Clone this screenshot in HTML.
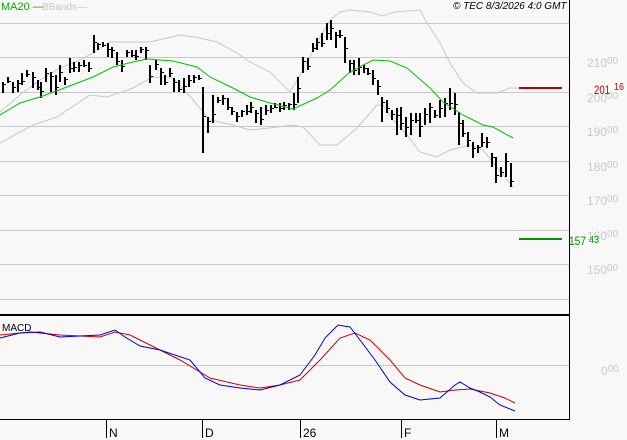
<!DOCTYPE html>
<html><head><meta charset="utf-8"><style>
html,body{margin:0;padding:0;background:#f8f8f8;width:627px;height:440px;overflow:hidden;font-family:"Liberation Sans",sans-serif}
svg{position:absolute;left:0;top:0}
</style></head><body>
<svg id="s" width="627" height="440" xmlns="http://www.w3.org/2000/svg" font-family="Liberation Sans, sans-serif">
<rect width="627" height="440" fill="#f8f8f8"/>
<g stroke="#c8c8c8" stroke-width="1">
<line x1="0" x2="569" y1="23.5" y2="23.5"/><line x1="0" x2="569" y1="57.5" y2="57.5"/><line x1="0" x2="569" y1="92.5" y2="92.5"/><line x1="0" x2="569" y1="126.5" y2="126.5"/><line x1="0" x2="569" y1="161.5" y2="161.5"/><line x1="0" x2="569" y1="195.5" y2="195.5"/><line x1="0" x2="569" y1="230.5" y2="230.5"/><line x1="0" x2="569" y1="264.5" y2="264.5"/><line x1="0" x2="569" y1="299.5" y2="299.5"/><line x1="0" x2="569" y1="365.5" y2="365.5"/>
</g>
<g fill="#c8c8c8" font-size="12">
<text x="587" y="67">210<tspan font-size="10" dy="-3">00</tspan></text>
<text x="587" y="102">200<tspan font-size="10" dy="-3">00</tspan></text>
<text x="587" y="136">190<tspan font-size="10" dy="-3">00</tspan></text>
<text x="587" y="171">180<tspan font-size="10" dy="-3">00</tspan></text>
<text x="587" y="205">170<tspan font-size="10" dy="-3">00</tspan></text>
<text x="587" y="240">160<tspan font-size="10" dy="-3">00</tspan></text>
<text x="587" y="274">150<tspan font-size="10" dy="-3">00</tspan></text>
<text x="601" y="375">0<tspan font-size="10" dy="-3">00</tspan></text>
</g>
<g id="bb" fill="none" stroke="#c8c8c8" stroke-width="1"></g>
<g id="bars" stroke="#000"></g>
<g id="ma" fill="none" stroke="#00c000" stroke-width="1"></g>
<g id="macd" fill="none" stroke-width="1"></g>
<line x1="519" x2="562" y1="88" y2="88" stroke="#c00000" stroke-width="2"/>
<text x="594" y="94" fill="#c00000" font-size="12" textLength="16" lengthAdjust="spacingAndGlyphs">201</text>
<text x="614" y="90" fill="#c00000" font-size="10" textLength="10" lengthAdjust="spacingAndGlyphs">16</text>
<line x1="519" x2="562" y1="239" y2="239" stroke="#009000" stroke-width="2"/>
<text x="569" y="245" fill="#009000" font-size="12" textLength="17" lengthAdjust="spacingAndGlyphs">157</text>
<text x="589" y="243" fill="#009000" font-size="10" textLength="10" lengthAdjust="spacingAndGlyphs">43</text>
<line x1="569.5" x2="569.5" y1="0" y2="420" stroke="#000" stroke-width="1"/>
<line x1="0" x2="570" y1="315" y2="315" stroke="#000" stroke-width="2"/>
<line x1="0" x2="570" y1="419.5" y2="419.5" stroke="#000" stroke-width="1"/>
<g stroke="#000" stroke-width="1">
<line x1="106.5" x2="106.5" y1="419" y2="438"/><line x1="202.5" x2="202.5" y1="419" y2="438"/><line x1="300.5" x2="300.5" y1="419" y2="438"/><line x1="401.5" x2="401.5" y1="419" y2="438"/><line x1="496.5" x2="496.5" y1="419" y2="438"/>
</g>
<g font-size="12" fill="#000">
<text x="109" y="437">N</text><text x="205" y="437">D</text><text x="303" y="437">26</text><text x="404" y="437">F</text><text x="499" y="437">M</text>
</g>
<text x="1" y="10" font-size="11" fill="#00b000">MA20 —</text>
<text x="42" y="10" font-size="10" fill="#c8c8c8">BBands—</text>
<text x="453" y="9" font-size="10" font-style="italic" fill="#000">© TEC 8/3/2026 4:0 GMT</text>
<text x="2" y="331" font-size="10" fill="#000">MACD</text>
</svg>
<script>
var NS="http://www.w3.org/2000/svg";
function pl(g,pts,col){var p=document.createElementNS(NS,"polyline");p.setAttribute("points",pts.map(function(a){return a.join(",")}).join(" "));if(col)p.setAttribute("stroke",col);document.getElementById(g).appendChild(p);}
pl("bb",[[0,143],[33,125],[57,117],[90,95],[107,97],[133,88],[153,77],[173,78],[187,93],[210,120],[233,125],[250,130],[270,128],[293,125],[303,127],[320,145],[337,145],[357,128],[377,105],[383,105],[393,120],[407,135],[420,152],[437,157],[450,150],[470,145],[483,150],[513,187]]);
pl("bb",[[0,112],[20,95],[40,80],[60,68],[80,60],[93,53],[110,42],[150,42],[180,35],[200,38],[217,42],[237,53],[250,62],[270,72],[290,92],[300,75],[317,43],[330,20],[340,12],[350,10],[370,12],[382,16],[395,12],[420,10],[427,23],[440,43],[450,63],[463,83],[477,93],[497,93],[510,88],[520,88]]);
pl("ma",[[0,115],[20,103],[40,97],[67,87],[93,77],[113,67],[133,62],[147,59],[173,61],[197,67],[210,77],[233,88],[250,97],[270,103],[293,109],[317,98],[330,90],[350,72],[373,60],[390,61],[407,68],[430,88],[443,102],[463,115],[483,125],[493,127],[513,138]]);
pl("macd",[[0,335],[30,332],[60,335],[100,337],[115,332],[130,335],[150,345],[180,360],[210,378],[240,385],[260,388],[280,385],[300,380],[320,360],[340,338],[355,333],[370,340],[390,360],[405,378],[420,385],[440,392],[455,390],[470,389],[490,393],[505,398],[515,403]],"#d00000");
pl("macd",[[0,338],[20,333],[40,332],[60,337],[100,335],[115,330],[125,337],[140,346],[160,350],[190,360],[205,378],[220,385],[240,388],[260,390],[280,385],[300,375],[315,355],[325,338],[338,325],[350,327],[360,340],[375,360],[390,382],[405,395],[420,400],[440,398],[455,385],[460,382],[470,388],[480,392],[490,397],[500,405],[515,411]],"#0000d0");
var b=[[2,82,93],[7,77,83],[12,82,93],[17,80,92],[21,73,85],[26,70,77],[32,72,88],[37,80,90],[40,82,98],[45,68,82],[50,72,92],[55,75,95],[59,65,82],[64,77,85],[69,58,73],[73,62,72],[78,62,72],[83,60,67],[88,62,72],[93,35,53],[97,43,50],[102,42,47],[107,43,57],[111,47,58],[116,52,65],[121,60,72],[126,50,57],[131,50,57],[135,50,60],[140,47,53],[145,47,60],[149,65,83],[155,60,70],[160,68,85],[164,75,85],[169,68,77],[173,78,92],[178,80,92],[183,78,93],[188,75,87],[193,75,83],[198,75,80],[202,87,153],[207,117,133],[212,95,123],[217,97,103],[222,95,105],[227,98,110],[231,107,115],[236,112,122],[241,110,117],[246,105,115],[250,102,113],[255,110,123],[260,107,125],[265,105,115],[270,105,113],[274,103,108],[279,103,112],[283,102,110],[288,103,110],[293,93,110],[297,77,103],[302,57,73],[307,58,70],[312,43,52],[316,38,50],[321,33,47],[326,23,40],[330,20,40],[335,32,48],[339,30,38],[344,37,63],[349,60,73],[353,60,75],[358,58,75],[363,65,73],[367,68,75],[372,70,85],[377,80,95],[381,97,122],[386,100,113],[391,110,120],[396,108,135],[400,107,130],[405,117,137],[410,113,135],[415,113,123],[419,113,137],[424,108,125],[429,103,123],[434,110,118],[439,100,118],[444,98,117],[449,88,110],[454,93,115],[458,112,145],[462,120,137],[467,132,147],[472,142,158],[477,145,153],[481,133,147],[486,137,148],[491,153,167],[495,157,183],[500,167,177],[505,153,177],[510,163,187]];
var d="",t2="";b.forEach(function(a,i){var x=a[0]+1,t=a[1],bt=a[2];var c=Math.round(t+(bt-t)*((i*37%10)/10*0.6+0.2));
d+="M"+x+" "+t+"V"+bt;t2+="M"+(x+1)+" "+c+".5h2";});
var p=document.createElementNS(NS,"path");p.setAttribute("d",d);p.setAttribute("stroke-width","2");p.setAttribute("fill","none");
document.getElementById("bars").appendChild(p);
var p2=document.createElementNS(NS,"path");p2.setAttribute("d",t2);p2.setAttribute("stroke-width","1");p2.setAttribute("fill","none");
document.getElementById("bars").appendChild(p2);
</script>
</body></html>
